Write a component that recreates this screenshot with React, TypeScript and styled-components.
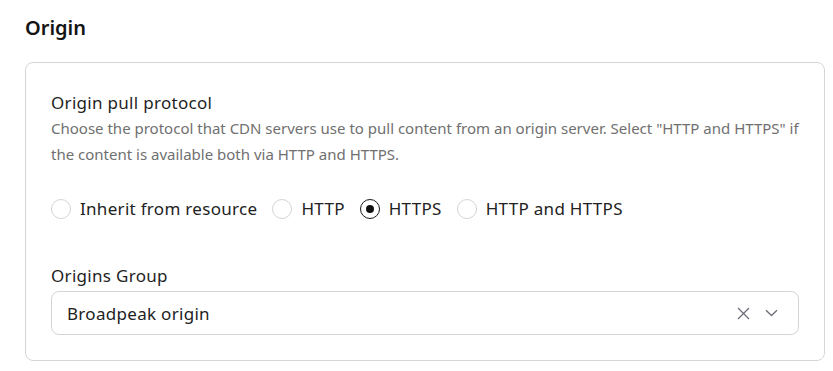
import { useState } from "react"
import styled, { createGlobalStyle } from "styled-components"

const GlobalStyle = createGlobalStyle`
  body {
    margin: 0;
    background: #ffffff;
    font-family: "Noto Sans", "Open Sans", sans-serif;
    color: #1f1f1f;
  }
`

const Page = styled.div`
  padding: 14px 8px 10px 25px;
`

const Heading = styled.h2`
  margin: 0 0 20px;
  font-size: 20px;
  line-height: 28px;
  font-weight: 600;
  color: #141414;
`

const Card = styled.section`
  width: 800px;
  box-sizing: border-box;
  border: 1px solid #d6d6d6;
  border-radius: 8px;
  padding: 28px 25px 25px;
`

const Title = styled.div`
  font-size: 17px;
  line-height: 24px;
  letter-spacing: 0.3px;
  color: #1f1f1f;
`

const Description = styled.p`
  margin: 0;
  font-size: 15px;
  line-height: 26px;
  color: #707070;
`

const RadioRow = styled.div`
  display: flex;
  align-items: center;
  gap: 15px;
  margin-top: 30px;
`

const RadioLabel = styled.label`
  display: flex;
  align-items: center;
  gap: 9px;
  font-size: 17px;
  line-height: 24px;
  letter-spacing: 0.3px;
  color: #222222;
  cursor: pointer;
`

const Circle = styled.span<{ checked: boolean }>`
  width: 20px;
  height: 20px;
  flex-shrink: 0;
  box-sizing: border-box;
  border-radius: 50%;
  border: ${p => (p.checked ? "1.5px solid #1a1a1a" : "1px solid #d4d4d4")};
  display: flex;
  align-items: center;
  justify-content: center;
  &::after {
    content: "";
    width: 8px;
    height: 8px;
    border-radius: 50%;
    background: #111111;
    display: ${p => (p.checked ? "block" : "none")};
  }
`

const FieldLabel = styled.div`
  margin-top: 43px;
  margin-bottom: 3px;
  font-size: 17px;
  line-height: 24px;
  letter-spacing: 0.3px;
  color: #1f1f1f;
`

const Select = styled.div`
  height: 44px;
  box-sizing: border-box;
  border: 1px solid #d4d4d4;
  border-radius: 8px;
  padding: 0 20px 0 15px;
  display: flex;
  align-items: center;
  font-size: 17px;
  letter-spacing: 0.3px;
  color: #222222;
`

const SelectValue = styled.span`
  flex: 1;
`

const IconButton = styled.span`
  display: flex;
  align-items: center;
  justify-content: center;
  width: 14px;
  height: 14px;
  margin-left: 14px;
  color: #6e6e78;
`

const options = ["Inherit from resource", "HTTP", "HTTPS", "HTTP and HTTPS"]

export default function App() {
  let [protocol, setProtocol] = useState("HTTPS")

  return (
    <Page>
      <GlobalStyle />
      <Heading>Origin</Heading>
      <Card>
        <Title>Origin pull protocol</Title>
        <Description>
          Choose the protocol that CDN servers use to pull content from an origin server. Select "HTTP and HTTPS" if
          the content is available both via HTTP and HTTPS.
        </Description>
        <RadioRow>
          {options.map(o => (
            <RadioLabel key={o} onClick={() => setProtocol(o)}>
              <Circle checked={protocol === o} />
              {o}
            </RadioLabel>
          ))}
        </RadioRow>
        <FieldLabel>Origins Group</FieldLabel>
        <Select>
          <SelectValue>Broadpeak origin</SelectValue>
          <IconButton>
            <svg width="13" height="13" viewBox="0 0 13 13" fill="none" stroke="currentColor" strokeWidth="1.3">
              <path d="M1 1L12 12M12 1L1 12" />
            </svg>
          </IconButton>
          <IconButton>
            <svg width="13" height="8" viewBox="0 0 13 8" fill="none" stroke="currentColor" strokeWidth="1.3">
              <path d="M1 1.2L6.5 6.5L12 1.2" />
            </svg>
          </IconButton>
        </Select>
      </Card>
    </Page>
  )
}
